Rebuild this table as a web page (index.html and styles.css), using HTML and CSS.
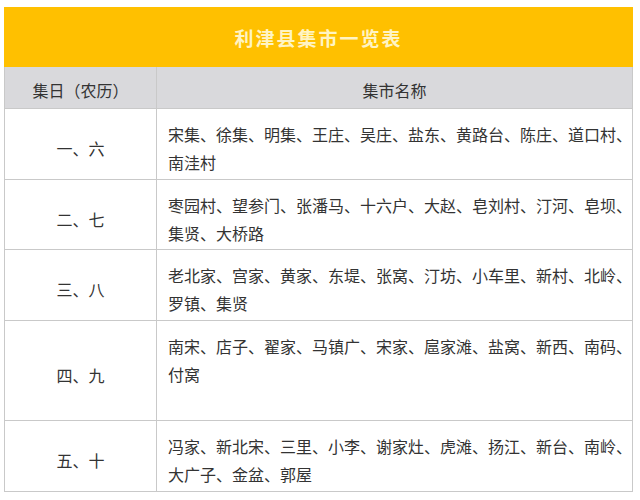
FILE: index.html
```html
<!DOCTYPE html>
<html lang="zh">
<head>
<meta charset="utf-8">
<link rel="stylesheet" href="styles.css">
</head>
<body>
<table class="market">
  <colgroup><col class="c1"><col class="c2"></colgroup>
  <thead>
    <tr class="title-row"><th colspan="2" class="title">利津县集市一览表</th></tr>
    <tr class="head-row"><th>集日（农历）</th><th>集市名称</th></tr>
  </thead>
  <tbody>
    <tr class="r71"><td class="day">一、六</td><td class="names">宋集、徐集、明集、王庄、吴庄、盐东、黄路台、陈庄、道口村、<br>南洼村</td></tr>
    <tr class="r70"><td class="day">二、七</td><td class="names">枣园村、望参门、张潘马、十六户、大赵、皂刘村、汀河、皂坝、<br>集贤、大桥路</td></tr>
    <tr class="r71"><td class="day">三、八</td><td class="names">老北家、宫家、黄家、东堤、张窝、汀坊、小车里、新村、北岭、<br>罗镇、集贤</td></tr>
    <tr class="r100"><td class="day">四、九</td><td class="names">南宋、店子、翟家、马镇广、宋家、扈家滩、盐窝、新西、南码、<br>付窝</td></tr>
    <tr class="r71"><td class="day">五、十</td><td class="names">冯家、新北宋、三里、小李、谢家灶、虎滩、扬江、新台、南岭、<br>大广子、金盆、郭屋</td></tr>
  </tbody>
</table>
</body>
</html>
```
FILE: styles.css
```css
html, body {
  margin: 0;
  padding: 0;
  background: #ffffff;
}
body {
  padding: 7px 0 0 4px;
  font-family: "Noto Sans CJK SC", "Noto Sans", sans-serif;
  color: #333333;
}
.market {
  width: 629px;
  border-collapse: collapse;
  table-layout: fixed;
  border: 1px solid #c9c9c9;
}
.c1 { width: 152px; }
.market th, .market td {
  border: 1px solid #c9c9c9;
  padding: 0;
  font-size: 16px;
  font-weight: normal;
}
.title-row { height: 59px; }
.title {
  background: #ffc000;
  color: #fff4c4;
  font-size: 19px !important;
  font-weight: bold !important;
  letter-spacing: 2px;
  text-align: center;
  vertical-align: middle;
  border-color: #ffc000 !important;
}
.head-row { height: 42px; }
.head-row th {
  background: #d9d9dc;
  color: #333333;
  text-align: center;
  vertical-align: middle;
  padding-top: 4px;
}
.r70 { height: 70px; }
.r71 { height: 71px; }
.r100 { height: 100px; }
.day {
  text-align: center;
  vertical-align: middle;
  padding-top: 8px !important;
}
.names {
  vertical-align: top;
  text-align: left;
  white-space: nowrap;
  line-height: 28px;
  padding: 11px 0 0 11px !important;
}
```
